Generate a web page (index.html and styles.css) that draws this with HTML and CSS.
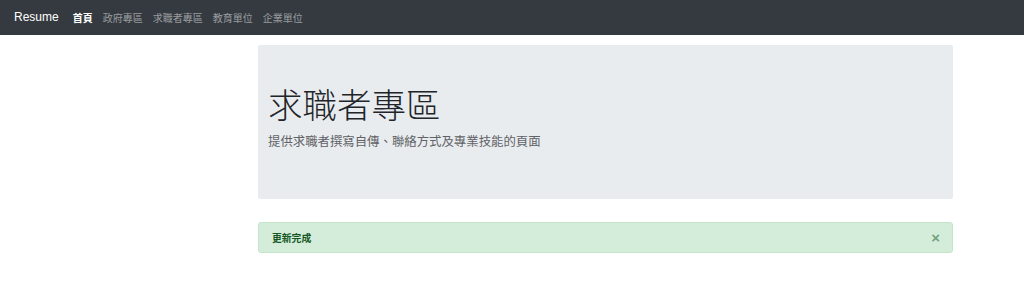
FILE: index.html
```html
<!DOCTYPE html>
<html lang="zh-Hant">
<head>
<meta charset="UTF-8">
<meta name="viewport" content="width=device-width, initial-scale=1.0">
<title>Resume</title>
<link rel="stylesheet" href="styles.css">
</head>
<body>
<nav class="navbar">
  <a class="brand" href="#">Resume</a>
  <ul class="nav-links">
    <li><a class="active" href="#">首頁</a></li>
    <li><a href="#">政府專區</a></li>
    <li><a href="#">求職者專區</a></li>
    <li><a href="#">教育單位</a></li>
    <li><a href="#">企業單位</a></li>
  </ul>
</nav>

<main class="content">
  <section class="jumbotron">
    <h1>求職者專區</h1>
    <p>提供求職者撰寫自傳、聯絡方式及專業技能的頁面</p>
  </section>

  <div class="alert">
    <strong>更新完成</strong>
    <button class="close" type="button">&times;</button>
  </div>
</main>
</body>
</html>
```

FILE: styles.css
```css
body {
  margin: 0;
  font-family: "Liberation Sans", "Noto Sans CJK TC", sans-serif;
  background-color: #fff;
  color: #212529;
}
.navbar {
  background-color: #343a40; /* gris oscuro */
  height: 35px;
  display: flex;
  align-items: center;
  padding: 0 14px 1px;
  box-sizing: border-box;
}
.brand {
  color: #fff;
  text-decoration: none;
  font-size: 12px;
  margin-right: 14px;
}
.nav-links {
  list-style: none;
  display: flex;
  gap: 10px;
  margin: 0;
  padding: 0;
}
.nav-links a {
  color: rgba(255, 255, 255, 0.5);
  text-decoration: none;
  font-size: 10px;
  font-family: "Noto Sans CJK TC", sans-serif;
}
.nav-links a.active {
  color: #fff;
  font-weight: bold;
}
.content {
  width: 695px;
  margin-left: 258px;
  padding-top: 10px;
}
.jumbotron {
  background-color: #e9ecef;
  padding: 38px 10px 48px;
  border-radius: 2px;
}
.jumbotron h1 {
  margin: 0 0 8px;
  font-family: "Noto Sans CJK TC", sans-serif;
  font-weight: 200;
  font-size: 34.5px;
  line-height: 1.2;
  color: #212529;
}
.jumbotron p {
  margin: 0;
  font-family: "Noto Sans CJK TC", sans-serif;
  font-size: 12.4px;
  line-height: 1.5;
  color: #5f6266;
}
.alert {
  margin-top: 23px;
  height: 31px;
  box-sizing: border-box;
  background-color: #d4edda;
  border: 1px solid #c3e6cb;
  border-radius: 3px;
  color: #155724;
  display: flex;
  align-items: center;
  justify-content: space-between;
  padding: 0 12px 0 13px;
}
.alert strong {
  font-family: "Noto Sans CJK TC", sans-serif;
  font-size: 9.8px;
}
.close {
  background: none;
  border: none;
  padding: 0;
  font-size: 15px;
  font-weight: bold;
  line-height: 1;
  color: #155724;
  opacity: 0.5;
  font-family: "Liberation Sans", sans-serif;
}
```
